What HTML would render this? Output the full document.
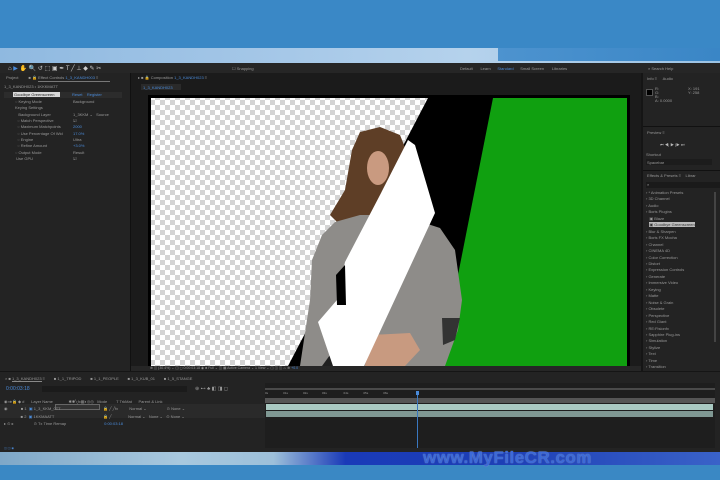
<!DOCTYPE html>
<html><head><style>
*{margin:0;padding:0;box-sizing:border-box}
body{width:720px;height:480px;overflow:hidden;background:#232323;font-family:"Liberation Sans",sans-serif;font-size:4px;color:#9a9a9a;position:relative}
.a{position:absolute}
.t{position:absolute;font-size:4px;color:#999;white-space:nowrap}
.b{color:#4a8ad8}
</style></head><body>
<div class="a" style="left:0;top:0;width:720px;height:48px;background:#3a88c6"></div>
<div class="a" style="left:0;top:48px;width:720px;height:15px;background:linear-gradient(90deg,#8fb9e0,#a6c8e8 40%,#b5d2ec 65%,#9cc3e4)"></div>
<div class="a" style="left:498px;top:48px;width:222px;height:13px;background:linear-gradient(90deg,#4d93cf,#3a86c6)"></div>
<div class="a" style="left:0;top:63px;width:720px;height:389px;background:#1d1d1d"></div>
<div class="a" style="left:0;top:63px;width:720px;height:10px;background:#262626"></div>
<div class="t" style="left:8px;top:65px;color:#ccc;font-size:6px">⌂ <span style="color:#4a8ad8">▶</span> ✋ 🔍 ↺ ⬚ ▣ ✒ T ╱ ⊥ ◆ ✎ ✂</div>
<div class="t" style="left:232px;top:66px">☐ Snapping</div>
<div class="t" style="left:460px;top:66px">Default&nbsp;&nbsp;&nbsp;&nbsp;&nbsp;&nbsp;&nbsp;Learn&nbsp;&nbsp;&nbsp;&nbsp;&nbsp;&nbsp;<span class="b">Standard</span>&nbsp;&nbsp;&nbsp;&nbsp;&nbsp;&nbsp;Small Screen&nbsp;&nbsp;&nbsp;&nbsp;&nbsp;&nbsp;&nbsp;Libraries</div>
<div class="t" style="left:648px;top:66px">⌕ Search Help</div>
<div class="a" style="left:0;top:73px;width:130px;height:298px;background:#232323"></div>
<div class="t" style="left:6px;top:75px">Project&nbsp;&nbsp;&nbsp;&nbsp;&nbsp;&nbsp;&nbsp;&nbsp;&nbsp;■ 🔒 Effect Controls <span class="b">1_3_KANDH003</span> ≡</div>
<div class="a" style="left:38px;top:81px;width:72px;height:1px;background:#777"></div>
<div class="t" style="left:4px;top:84px">1_3_KANDH023 • 1KKKMATT</div>
<div class="a" style="left:4px;top:92px;width:118px;height:6px;background:#2c2c2c"></div>
<div class="a" style="left:13px;top:92px;width:47px;height:5px;background:#d8d8d8"></div>
<div class="t" style="left:14px;top:92px;color:#222">Goodbye Greenscreen</div>
<div class="t" style="left:72px;top:92px" ><span class="b">Reset&nbsp;&nbsp;&nbsp;&nbsp;Register</span></div>
<div class="t" style="left:15px;top:99px;line-height:6.35px">◌ Keying Mode<br>Keying Settings<br>&nbsp;&nbsp;&nbsp;Background Layer<br>&nbsp;&nbsp;◌ Match Perspective<br>&nbsp;&nbsp;◌ Maximum Matchpoints<br>&nbsp;&nbsp;◌ Use Percentage Of Wid<br>&nbsp;&nbsp;◌ Engine<br>&nbsp;&nbsp;◌ Refine Amount<br>◌ Output Mode<br>&nbsp;Use GPU</div>
<div class="t" style="left:73px;top:99px;line-height:6.35px">Background<br>&nbsp;<br>1_3KKM ⌄&nbsp;&nbsp; Source<br>☑<br><span class="b">2000</span><br><span class="b">17.0%</span><br>Ultra<br><span class="b">+3.0%</span><br>Result<br>☑</div>
<div class="a" style="left:130px;top:73px;width:1px;height:298px;background:#111"></div>
<div class="a" style="left:131px;top:73px;width:510px;height:298px;background:#1b1b1b"></div>
<div class="t" style="left:138px;top:75px">▸ ■ 🔒 Composition <span class="b">1_3_KANDH023</span> ≡</div>
<div class="a" style="left:141px;top:84px;width:40px;height:6px;background:#2a2a2a"></div>
<div class="t" style="left:143px;top:85px" ><span class="b">1_3_KANDH023</span></div>
<svg class="a" style="left:131px;top:73px" width="510" height="298" viewBox="131 73 510 298">
<defs><pattern id="ck" width="10" height="10" patternUnits="userSpaceOnUse"><rect width="10" height="10" fill="#fff"/><rect width="5" height="5" fill="#d4d4d4"/><rect x="5" y="5" width="5" height="5" fill="#d4d4d4"/></pattern></defs>
<rect x="148" y="95" width="482" height="273" fill="#000"/>
<rect x="151" y="98" width="476" height="268" fill="url(#ck)"/>
<polygon points="428,98 627,98 627,366 288,366" fill="#000"/>
<polygon points="493,98 627,98 627,366 440,366" fill="#10a010"/>
<polygon points="360,132 380,127 400,135 410,160 412,215 395,225 340,225 330,215 345,190 352,150" fill="#5e3e26"/>
<ellipse cx="378" cy="168" rx="11" ry="17" fill="#c99a80"/>
<polygon points="335,222 360,215 400,215 440,228 455,250 462,300 458,330 445,366 300,366 310,300 312,260 322,235" fill="#8e8c89"/>
<polygon points="442,318 460,318 455,340 443,345" fill="#333"/>
<polygon points="370,335 410,333 420,350 405,366 365,366" fill="#c89a80"/>
<polygon points="330,355 345,345 355,366 322,366" fill="#202020"/>
<polygon points="408,140 415,145 435,213 364,366 333,366 318,322 337,300 345,262 380,195" fill="#fff"/>
<polygon points="336,275 345,265 346,305 337,305" fill="#000"/>
</svg>
<div class="a" style="left:131px;top:366px;width:510px;height:5px;background:#262626"></div>
<div class="t" style="left:150px;top:366px;font-size:3.5px">⊕ ◫ (30.4%) ⌄ ◫ ◻ 0:00:03:18 ◉ ♣ Full ⌄ ◫ ▦ Active Camera ⌄ 1 View ⌄ ◫ ◫ ◫ ♨ ⊕ <span class="b">+0.0</span></div>
<div class="a" style="left:641px;top:73px;width:79px;height:298px;background:#232323"></div>
<div class="a" style="left:641px;top:73px;width:2px;height:298px;background:#151515"></div>
<div class="t" style="left:647px;top:76px">Info ≡&nbsp;&nbsp;&nbsp;&nbsp;&nbsp;Audio</div>
<div class="a" style="left:646px;top:89px;width:7px;height:7px;background:#000;border:1px solid #555"></div>
<div class="t" style="left:655px;top:87px;line-height:4px">R:<br>G:<br>B:<br>A: 0.0000</div>
<div class="t" style="left:688px;top:87px;line-height:4px">X: 191<br>Y: 258</div>
<div class="a" style="left:643px;top:126px;width:77px;height:1px;background:#111"></div>
<div class="t" style="left:647px;top:130px">Preview ≡</div>
<div class="t" style="left:660px;top:142px;color:#bbb">⏮ ◀| ▶ |▶ ⏭</div>
<div class="t" style="left:646px;top:152px">Shortcut</div>
<div class="a" style="left:646px;top:159px;width:66px;height:6px;background:#1c1c1c"></div>
<div class="t" style="left:647px;top:160px">Spacebar</div>
<div class="a" style="left:643px;top:170px;width:77px;height:1px;background:#111"></div>
<div class="t" style="left:647px;top:173px">Effects &amp; Presets ≡&nbsp;&nbsp;&nbsp;&nbsp;Librar</div>
<div class="a" style="left:646px;top:182px;width:74px;height:6px;background:#1a1a1a"></div>
<div class="t" style="left:647px;top:182px">⌕</div>
<div class="t" style="left:646px;top:190px;line-height:6.45px">› * Animation Presets<br>› 3D Channel<br>› Audio<br>› Boris Plugins<br>&nbsp;&nbsp;&nbsp;▣ Blaze<br>&nbsp;&nbsp;&nbsp;<span style="background:#bbb;color:#333">▣ Goodbye Greenscreen</span><br>› Blur &amp; Sharpen<br>› Boris FX Mocha<br>› Channel<br>› CINEMA 4D<br>› Color Correction<br>› Distort<br>› Expression Controls<br>› Generate<br>› Immersive Video<br>› Keying<br>› Matte<br>› Noise &amp; Grain<br>› Obsolete<br>› Perspective<br>› Red Giant<br>› RE:Fisionfx<br>› Sapphire Plug-ins<br>› Simulation<br>› Stylize<br>› Text<br>› Time<br>› Transition</div>
<div class="a" style="left:714px;top:192px;width:2px;height:150px;background:#444"></div>
<div class="a" style="left:0;top:371px;width:720px;height:81px;background:#232323;border-top:1px solid #151515"></div>
<div class="t" style="left:5px;top:376px">× ■ <span style="border-bottom:1px solid #888">1_3_KANDH023</span> ≡&nbsp;&nbsp;&nbsp;&nbsp;&nbsp;&nbsp;&nbsp;&nbsp;■ 1_1_TRIPOD&nbsp;&nbsp;&nbsp;&nbsp;&nbsp;&nbsp;&nbsp;&nbsp;■ 1_1_PEOPLE&nbsp;&nbsp;&nbsp;&nbsp;&nbsp;&nbsp;&nbsp;&nbsp;■ 1_3_KUB_01&nbsp;&nbsp;&nbsp;&nbsp;&nbsp;&nbsp;&nbsp;&nbsp;■ 1_5_STANGE</div>
<div class="t" style="left:6px;top:386px;font-size:5px;color:#4a8ad8">0:00:03:18</div>
<div class="a" style="left:42px;top:386px;width:145px;height:6px;background:#1b1b1b"></div>
<div class="t" style="left:195px;top:386px;font-size:5px">⊕ ⊷ ♣ ◧ ◨ ◻</div>
<div class="t" style="left:4px;top:399px">◉◑♦🔒 ◆ #&nbsp;&nbsp;&nbsp;&nbsp;&nbsp;&nbsp;Layer Name&nbsp;&nbsp;&nbsp;&nbsp;&nbsp;&nbsp;&nbsp;&nbsp;&nbsp;&nbsp;&nbsp;&nbsp;&nbsp;&nbsp;✱✱╲fx▦◐◎◎&nbsp;&nbsp;&nbsp;Mode&nbsp;&nbsp;&nbsp;&nbsp;&nbsp;&nbsp;&nbsp;&nbsp;T TrkMat&nbsp;&nbsp;&nbsp;&nbsp;&nbsp;&nbsp;Parent &amp; Link</div>
<div class="a" style="left:0;top:404px;width:265px;height:14px;background:#2a2a2a"></div>
<div class="a" style="left:55px;top:404px;width:45px;height:6px;border:1px solid #666;background:#333"></div>
<div class="t" style="left:4px;top:405px;line-height:7.5px">◉&nbsp;&nbsp;&nbsp;&nbsp;&nbsp;&nbsp;&nbsp;&nbsp;&nbsp;&nbsp;&nbsp;&nbsp;■ 1 &nbsp;<span class="b">▣</span> 1_3_KKM_0TT<br>&nbsp;&nbsp;&nbsp;&nbsp;&nbsp;&nbsp;&nbsp;&nbsp;&nbsp;&nbsp;&nbsp;&nbsp;&nbsp;&nbsp;&nbsp;■ 2 &nbsp;<span class="b">▣</span> 1KKMAATT<br>▸ ⊙ ▸&nbsp;&nbsp;&nbsp;&nbsp;&nbsp;&nbsp;&nbsp;&nbsp;&nbsp;&nbsp;&nbsp;&nbsp;&nbsp;&nbsp;&nbsp;&nbsp;&nbsp;&nbsp;⊙ Tx Time Remap</div>
<div class="t" style="left:103px;top:405px;line-height:7.5px">🔒 ╱ ╱fx&nbsp;&nbsp;&nbsp;&nbsp;&nbsp;&nbsp;&nbsp;&nbsp;&nbsp;&nbsp;Normal ⌄&nbsp;&nbsp;&nbsp;&nbsp;&nbsp;&nbsp;&nbsp;&nbsp;&nbsp;&nbsp;&nbsp;&nbsp;&nbsp;&nbsp;&nbsp;&nbsp;&nbsp;&nbsp;⊙ None ⌄<br>🔒 ╱&nbsp;&nbsp;&nbsp;&nbsp;&nbsp;&nbsp;&nbsp;&nbsp;&nbsp;&nbsp;&nbsp;&nbsp;&nbsp;&nbsp;&nbsp;Normal ⌄&nbsp;&nbsp;&nbsp;None ⌄&nbsp;&nbsp;&nbsp;⊙ None ⌄<br><span class="b">&nbsp;0:00:03:18</span></div>
<div class="a" style="left:265px;top:383px;width:450px;height:65px;background:#1e1e1e"></div>
<div class="a" style="left:265px;top:398px;width:450px;height:5px;background:#555"></div>
<div class="t" style="left:265px;top:391px;font-size:3px">0s&nbsp;&nbsp;&nbsp;&nbsp;&nbsp;&nbsp;&nbsp;&nbsp;&nbsp;&nbsp;&nbsp;&nbsp;&nbsp;&nbsp;&nbsp;&nbsp;&nbsp;&nbsp;01s&nbsp;&nbsp;&nbsp;&nbsp;&nbsp;&nbsp;&nbsp;&nbsp;&nbsp;&nbsp;&nbsp;&nbsp;&nbsp;&nbsp;&nbsp;&nbsp;&nbsp;&nbsp;02s&nbsp;&nbsp;&nbsp;&nbsp;&nbsp;&nbsp;&nbsp;&nbsp;&nbsp;&nbsp;&nbsp;&nbsp;&nbsp;&nbsp;&nbsp;&nbsp;&nbsp;03s&nbsp;&nbsp;&nbsp;&nbsp;&nbsp;&nbsp;&nbsp;&nbsp;&nbsp;&nbsp;&nbsp;&nbsp;&nbsp;&nbsp;&nbsp;&nbsp;&nbsp;&nbsp;&nbsp;&nbsp;04s&nbsp;&nbsp;&nbsp;&nbsp;&nbsp;&nbsp;&nbsp;&nbsp;&nbsp;&nbsp;&nbsp;&nbsp;&nbsp;&nbsp;&nbsp;&nbsp;&nbsp;&nbsp;05s&nbsp;&nbsp;&nbsp;&nbsp;&nbsp;&nbsp;&nbsp;&nbsp;&nbsp;&nbsp;&nbsp;&nbsp;&nbsp;&nbsp;&nbsp;&nbsp;&nbsp;&nbsp;06s</div>
<div class="a" style="left:266px;top:404px;width:447px;height:6px;background:#a9c9c2"></div>
<div class="a" style="left:266px;top:411px;width:447px;height:6px;background:#7f9893"></div>
<div class="a" style="left:265px;top:388px;width:450px;height:2px;background:#4a4a4a"></div>
<div class="a" style="left:416px;top:391px;width:3px;height:4px;background:#4a8ad8"></div>
<div class="a" style="left:417px;top:395px;width:1px;height:53px;background:#3a78c0"></div>
<div class="t" style="left:4px;top:446px;font-size:3px" ><span class="b">◫ ◫ ◉</span></div>
<div class="a" style="left:0;top:452px;width:720px;height:13px;background:linear-gradient(90deg,#7fa8c8,#a8c8de 25%,#9dc0da 38%,#1a3ab8 48%,#1d3fb6 70%,#3a62c8)"></div>
<div class="a" style="left:0;top:465px;width:720px;height:15px;background:#3a88c4"></div>
<div class="t" style="left:423px;top:448px;font-size:17px;font-weight:bold;color:#3d6ad8;letter-spacing:0.5px;text-shadow:0 0 1px #9ab">www.MyFileCR.com</div>
</body></html>
